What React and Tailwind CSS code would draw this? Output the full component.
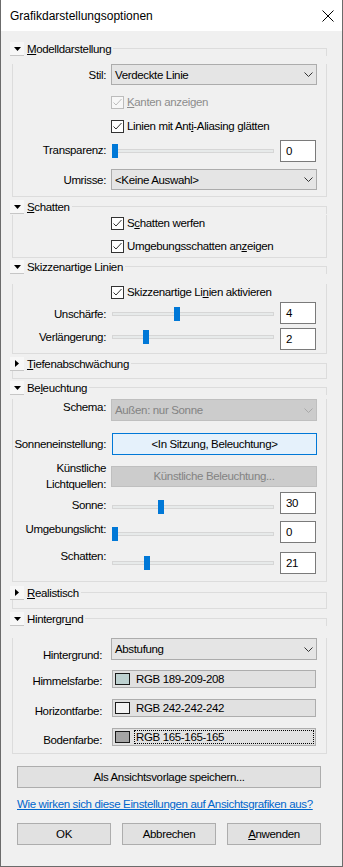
import React from "react";

function Toggle({ open }) {
  return (
    <div className="w-[14px] h-[14px] shrink-0 bg-[#f7f7f7] border-b border-[#c6c6c6] flex items-center justify-center">
      {open ? (
        <svg width="7" height="4" viewBox="0 0 7 4">
          <path d="M0 0H7L3.5 4Z" fill="#000" />
        </svg>
      ) : (
        <svg width="4" height="7" viewBox="0 0 4 7">
          <path d="M0 0V7L4 3.5Z" fill="#000" />
        </svg>
      )}
    </div>
  );
}

function Group({ title, open, className, bodyClass, children }) {
  return (
    <div className={className}>
      <div className="flex h-[14px]">
        <Toggle open={open} />
        <span className="pl-[3px] pr-[2px] leading-[14px] whitespace-nowrap">{title}</span>
        <div className="flex-1 mt-[6px] border-t border-r border-[#dcdcdc]" />
      </div>
      <div className={"ml-[2px] border-l border-r border-b border-[#dcdcdc] " + bodyClass}>{children}</div>
    </div>
  );
}

function Chevron({ color }) {
  return (
    <svg width="9" height="5" viewBox="0 0 9 5">
      <path d="M0.5 0.5L4.5 4.5L8.5 0.5" stroke={color} fill="none" strokeWidth="1" />
    </svg>
  );
}

function Select({ value, disabled, className }) {
  return (
    <div
      className={
        "w-[206px] flex items-center justify-between pl-[3px] pr-[3px] border whitespace-nowrap " +
        (disabled ? "bg-[#cccccc] border-[#bfbfbf] text-[#838383] " : "bg-[#e5e5e5] border-[#acacac] ") +
        className
      }
    >
      <span>{value}</span>
      <Chevron color={disabled ? "#a8a8a8" : "#333333"} />
    </div>
  );
}

function Checkbox({ disabled }) {
  const c = disabled ? "#bcbcbc" : "#333333";
  return (
    <div
      className={
        "w-[13px] h-[13px] shrink-0 border flex items-center justify-center " +
        (disabled ? "border-[#bcbcbc] bg-[#f7f7f7]" : "border-[#333333] bg-white")
      }
    >
      <svg width="11" height="11" viewBox="0 0 11 11">
        <path d="M1.5 5.5L4 8L9.5 2" stroke={c} fill="none" strokeWidth="1" />
      </svg>
    </div>
  );
}

function CheckRow({ children, disabled, className }) {
  return (
    <div className={"flex items-center h-[16px] " + className}>
      <div className="w-[98px] shrink-0" />
      <Checkbox disabled={disabled} />
      <span className={"ml-[3px] whitespace-nowrap " + (disabled ? "text-[#8d8d8d]" : "")}>{children}</span>
    </div>
  );
}

function SliderRow({ label, value, pos, className, labelClass, sliderClass }) {
  return (
    <div className={"flex items-start h-[22px] " + className}>
      <div className={"w-[93px] shrink-0 text-right leading-[16px] whitespace-nowrap " + labelClass}>{label}</div>
      <div className={"relative ml-[6px] w-[162px] h-[14px] " + sliderClass}>
        <div className="absolute left-0 right-0 top-[5px] h-[4px] bg-[#e7eaea] border border-[#d6d6d6]" />
        <div className="absolute top-0 w-[6px] h-[14px] bg-[#0078d7]" style={{ left: pos }} />
      </div>
      <div className="ml-[6px] w-[36px] h-[22px] bg-white border border-[#7a7a7a] pl-[5px] leading-[20px]">{value}</div>
    </div>
  );
}

function ColorRow({ label, rgb, swatch, focus, className, labelClass }) {
  return (
    <div className={"flex items-start h-[18px] " + className}>
      <div className={"w-[89px] shrink-0 text-right leading-[16px] whitespace-nowrap " + labelClass}>{label}</div>
      <div className="ml-[10px] w-[204px] h-[18px] bg-[#e1e1e1] border border-[#adadad] flex items-center pl-[2px]">
        <div className="w-[15px] h-[12px] shrink-0 border border-[#1a1a1a]" style={{ background: swatch }} />
        {focus ? (
          <div className="ml-[4px] mr-[1px] flex-1 h-[14px] border border-dotted border-[#000] pl-[1px] leading-[12px]">{rgb}</div>
        ) : (
          <span className="ml-[6px] leading-[16px]">{rgb}</span>
        )}
      </div>
    </div>
  );
}

const Btn = ({ children, className }) => (
  <div className={"h-[22px] bg-[#e1e1e1] border border-[#adadad] flex items-center justify-center " + className}>
    {children}
  </div>
);

export default function App() {
  return (
    <div className="w-[343px] h-[867px] bg-[#f0f0f0] border-x border-b border-[#6b6b6b] flex flex-col font-['Liberation_Sans',Arial,sans-serif] text-[11.5px] tracking-[-0.35px] text-black leading-[16px]">
      <div className="h-[31px] shrink-0 bg-white flex items-center justify-between pl-[9px] pr-[8px]">
        <span className="text-[12px] tracking-normal">Grafikdarstellungsoptionen</span>
        <svg width="12" height="12" viewBox="0 0 12 12">
          <path d="M0.5 0.5L11.5 11.5M11.5 0.5L0.5 11.5" stroke="#000" strokeWidth="1" />
        </svg>
      </div>

      <div className="flex flex-col pl-[9px] pr-[15px] pt-[11px]">
        <Group
          open
          title={
            <>
              <u>M</u>odelldarstellung
            </>
          }
          className=""
          bodyClass="pb-[6px]"
        >
          <div className="flex items-center h-[21px] mt-[8px]">
            <div className="w-[93px] shrink-0 text-right">Stil:</div>
            <Select value="Verdeckte Linie" className="ml-[5px] h-[21px]" />
          </div>
          <CheckRow disabled className="mt-[9px]">
            <u>K</u>anten anzeigen
          </CheckRow>
          <CheckRow className="mt-[8px]">
            Linien mit Ant<u>i</u>-Aliasing glätten
          </CheckRow>
          <SliderRow label="Transparenz:" value="0" pos={0} className="mt-[6px]" labelClass="mt-[2px]" sliderClass="mt-[4px]" />
          <div className="flex items-center h-[21px] mt-[7px]">
            <div className="w-[93px] shrink-0 text-right">Umrisse:</div>
            <Select value="<Keine Auswahl>" className="ml-[5px] h-[21px]" />
          </div>
        </Group>

        <Group
          open
          title={
            <>
              <u>S</u>chatten
            </>
          }
          className="mt-[3px]"
          bodyClass="pb-[3px]"
        >
          <CheckRow className="mt-[1px]">
            S<u>c</u>hatten werfen
          </CheckRow>
          <CheckRow className="mt-[7px]">
            Umgebungsschatten an<u>z</u>eigen
          </CheckRow>
        </Group>

        <Group open title="Skizzenartige Linien" className="mt-[2px]" bodyClass="pb-[3px]">
          <CheckRow className="mt-[10px]">
            Skizzenartige Li<u>n</u>ien aktivieren
          </CheckRow>
          <SliderRow label="Unschärfe:" value="4" pos={62} className="mt-[2px]" labelClass="mt-[4px]" sliderClass="mt-[5px]" />
          <SliderRow label="Verlängerung:" value="2" pos={31} className="mt-[4px]" labelClass="mt-[1px]" sliderClass="mt-[2px]" />
        </Group>

        <Group
          title={
            <>
              <u>T</u>iefenabschwächung
            </>
          }
          className="mt-[3px]"
          bodyClass="h-[8px]"
        />

        <Group
          open
          title={
            <>
              Be<u>l</u>euchtung
            </>
          }
          className="mt-[2px]"
          bodyClass="pb-[7px]"
        >
          <div className="flex items-start h-[22px] mt-[4px]">
            <div className="w-[93px] shrink-0 text-right leading-[16px]">Schema:</div>
            <Select value="Außen: nur Sonne" disabled className="ml-[5px] h-[22px]" />
          </div>
          <div className="flex items-center h-[22px] mt-[12px]">
            <div className="w-[93px] shrink-0 text-right whitespace-nowrap">Sonneneinstellung:</div>
            <div className="ml-[6px] w-[205px] h-[22px] bg-[#e5f1fb] border border-[#0078d7] flex items-center justify-center">
              &lt;In Sitzung, Beleuchtung&gt;
            </div>
          </div>
          <div className="flex items-center h-[32px] mt-[5px]">
            <div className="w-[93px] shrink-0 text-right leading-[16px]">
              Künstliche
              <br />
              Lichtquellen:
            </div>
            <div className="ml-[5px] w-[206px] h-[21px] bg-[#cccccc] border border-[#bfbfbf] text-[#838383] flex items-center justify-center">
              Künstliche Beleuchtung...
            </div>
          </div>
          <SliderRow label="Sonne:" value="30" pos={46} className="" labelClass="mt-[5px]" sliderClass="mt-[8px]" />
          <SliderRow label="Umgebungslicht:" value="0" pos={0} className="mt-[7px]" labelClass="mt-0" sliderClass="mt-[6px]" />
          <SliderRow label="Schatten:" value="21" pos={32} className="mt-[9px]" labelClass="-mt-[4px]" sliderClass="mt-[4px]" />
        </Group>

        <Group
          title={
            <>
              <u>R</u>ealistisch
            </>
          }
          className="mt-[4px]"
          bodyClass="h-[9px]"
        />

        <Group
          open
          title={
            <>
              Hintergr<u>u</u>nd
            </>
          }
          className="mt-[3px]"
          bodyClass="pb-[7px]"
        >
          <div className="flex items-start h-[22px] mt-[12px]">
            <div className="w-[89px] shrink-0 text-right leading-[16px] mt-[9px]">Hintergrund:</div>
            <Select value="Abstufung" className="ml-[9px] h-[22px]" />
          </div>
          <ColorRow label="Himmelsfarbe:" rgb="RGB 189-209-208" swatch="rgb(189,209,208)" className="mt-[10px]" labelClass="mt-[3px]" />
          <ColorRow label="Horizontfarbe:" rgb="RGB 242-242-242" swatch="rgb(242,242,242)" className="mt-[11px]" labelClass="mt-[4px]" />
          <ColorRow label="Bodenfarbe:" rgb="RGB 165-165-165" swatch="rgb(165,165,165)" focus className="mt-[11px]" labelClass="mt-[4px]" />
        </Group>

        <Btn className="mt-[12px] ml-[7px] w-[304px]">Als Ansichtsvorlage speichern...</Btn>

        <div className="mt-[8px] ml-[7px] text-[#0066cc] underline whitespace-nowrap">
          Wie wirken sich diese Einstellungen auf Ansichtsgrafiken aus?
        </div>

        <div className="flex gap-[11px] mt-[11px] ml-[7px]">
          <Btn className="w-[94px]">OK</Btn>
          <Btn className="w-[94px]">Abbrechen</Btn>
          <Btn className="w-[94px]">
            <span>
              <u>A</u>nwenden
            </span>
          </Btn>
        </div>
      </div>
    </div>
  );
}
